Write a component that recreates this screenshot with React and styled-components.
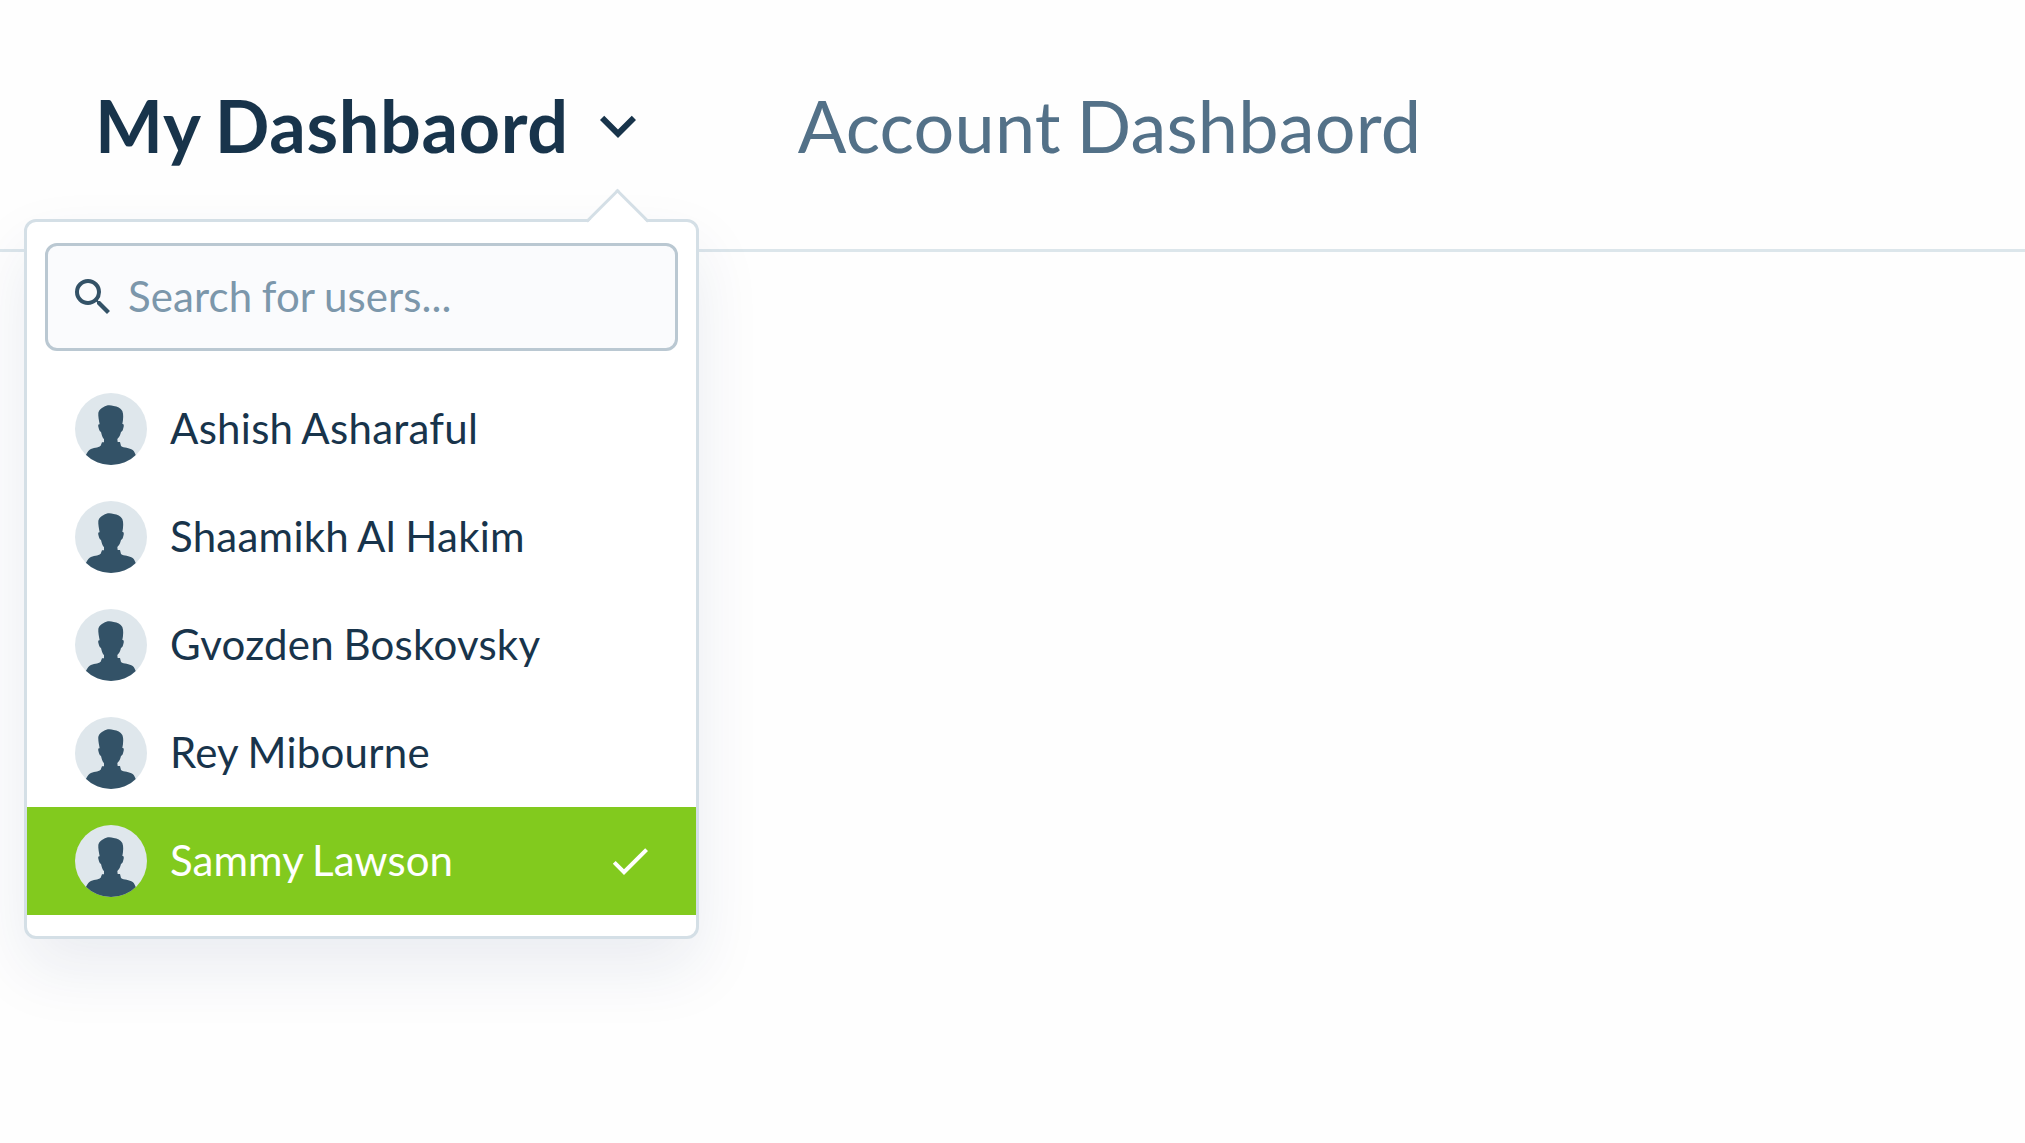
import React from 'react';
import styled, { createGlobalStyle } from 'styled-components';

const GlobalStyle = createGlobalStyle`
  *, *::before, *::after { box-sizing: border-box; }
  body {
    margin: 0;
    background: #fefefe;
    font-family: Lato, "Liberation Sans", sans-serif;
    color: #18344b;
  }
`;

const Page = styled.div`
  min-height: 1143px;
  overflow: hidden;
`;

const Header = styled.header`
  display: flex;
  align-items: flex-start;
  gap: 144px;
  height: 252px;
  padding: 82px 0 0 95px;
  border-bottom: 3px solid #dce6eb;
`;

const Tab = styled.div`
  position: relative;
  display: flex;
  align-items: center;
  gap: 13px;
  height: 87px;
  font-size: 72px;
  line-height: 87px;
  white-space: nowrap;
  font-weight: ${(p) => (p.$active ? 700 : 400)};
  letter-spacing: ${(p) => (p.$active ? 0.65 : 0.2)}px;
  word-spacing: ${(p) => (p.$active ? -3.2 : -3)}px;
  color: ${(p) => (p.$active ? '#18344b' : '#537188')};
`;

const Icon = styled.svg`
  display: block;
  flex: none;
  width: ${(p) => p.$size}px;
  height: ${(p) => p.$size}px;
  fill: currentColor;
`;

const Menu = styled.div`
  position: absolute;
  top: 137px;
  left: -71px;
  width: 675px;
  padding: 21px 0;
  border: 3px solid #d4dfe6;
  border-radius: 12px;
  background: #fff;
  box-shadow: 0 30px 66px 0 rgba(26, 51, 100, 0.085);
  font-size: 42px;
  font-weight: 400;
  line-height: 54px;
  letter-spacing: 0.25px;
  word-spacing: -1.5px;

  &::before {
    content: '';
    position: absolute;
    top: -24px;
    right: 56px;
    width: 45px;
    height: 45px;
    border: 3px solid #d4dfe6;
    border-right: 0;
    border-bottom: 0;
    background: linear-gradient(135deg, #fff 50%, transparent 50%);
    transform: rotate(45deg);
  }
`;

const SearchBox = styled.div`
  position: relative;
  display: flex;
  align-items: center;
  gap: 11px;
  height: 108px;
  margin: 0 18px 24px;
  padding: 0 21px;
  border: 3px solid #bac8d2;
  border-radius: 12px;
  background: #fafbfd;
  color: #335267;
`;

const Placeholder = styled.span`
  padding-bottom: 2px;
  color: #7c97ab;
  letter-spacing: 0.1px;
  word-spacing: -1.3px;
`;

const List = styled.ul`
  margin: 0;
  padding: 0;
  list-style: none;
`;

const Row = styled.li`
  display: flex;
  align-items: center;
  gap: 23px;
  height: 108px;
  padding: 0 42px 0 48px;
  background: ${(p) => (p.$selected ? '#82ca1e' : 'transparent')};
  color: ${(p) => (p.$selected ? '#fff' : '#18344b')};
  letter-spacing: ${(p) => (p.$selected ? 0.05 : 0.25)}px;
`;

const Name = styled.span`
  flex: 1;
  padding-bottom: 2px;
`;

const AvatarArt = styled.svg`
  display: block;
  flex: none;
  width: 72px;
  height: 72px;
  border-radius: 50%;
  background: #dfe7ec;
  fill: #335267;
`;

const Avatar = () => (
  <AvatarArt viewBox="44 38 216 216" aria-hidden="true">
    <path d="M118 132C116 120 113 108 114 97C116 88 123 84 130 80C138 74 150 74 160 77C171 78 181 83 186 92C190 101 189 117 186 131C190 130 191 134 190 139C188 147 187 153 182 155C180 164 177 171 171 176L172 185H179L182 197C190 203 208 202 217 209C222 213 224 219 227 226L215 254H88L76 226C79 219 82 212 88 208C98 201 114 203 121 196L125 186H131V177C126 171 124 163 122 155C117 152 116 147 114 139C113 134 114 130 118 132Z" />
  </AvatarArt>
);

const users = [
  'Ashish Asharaful',
  'Shaamikh Al Hakim',
  'Gvozden Boskovsky',
  'Rey Mibourne',
  'Sammy Lawson',
];

export default function App() {
  const selected = 'Sammy Lawson';
  return (
    <Page>
      <GlobalStyle />
      <Header>
        <Tab $active>
          <span>My Dashbaord</span>
          <Icon $size={72} viewBox="0 0 24 24">
            <path d="M7.41 8.59L12 13.17l4.59-4.58L18 10l-6 6-6-6z" />
          </Icon>
          <Menu>
            <SearchBox>
              <Icon $size={48} viewBox="0 0 24 24">
                <path d="M15.5 14h-.79l-.28-.27A6.471 6.471 0 0 0 16 9.5 6.5 6.5 0 1 0 9.5 16c1.61 0 3.09-.59 4.23-1.57l.27.28v.79l5 4.99L20.49 19l-4.99-5zm-6 0C7.01 14 5 11.99 5 9.5S7.01 5 9.5 5 14 7.01 14 9.5 11.99 14 9.5 14z" />
              </Icon>
              <Placeholder>Search for users...</Placeholder>
            </SearchBox>
            <List>
              {users.map((name) => (
                <Row key={name} $selected={name === selected}>
                  <Avatar />
                  <Name>{name}</Name>
                  {name === selected && (
                    <Icon $size={48} viewBox="0 0 24 24">
                      <path d="M9 16.17L4.83 12l-1.42 1.41L9 19 21 7l-1.41-1.41z" />
                    </Icon>
                  )}
                </Row>
              ))}
            </List>
          </Menu>
        </Tab>
        <Tab>Account Dashbaord</Tab>
      </Header>
    </Page>
  );
}
